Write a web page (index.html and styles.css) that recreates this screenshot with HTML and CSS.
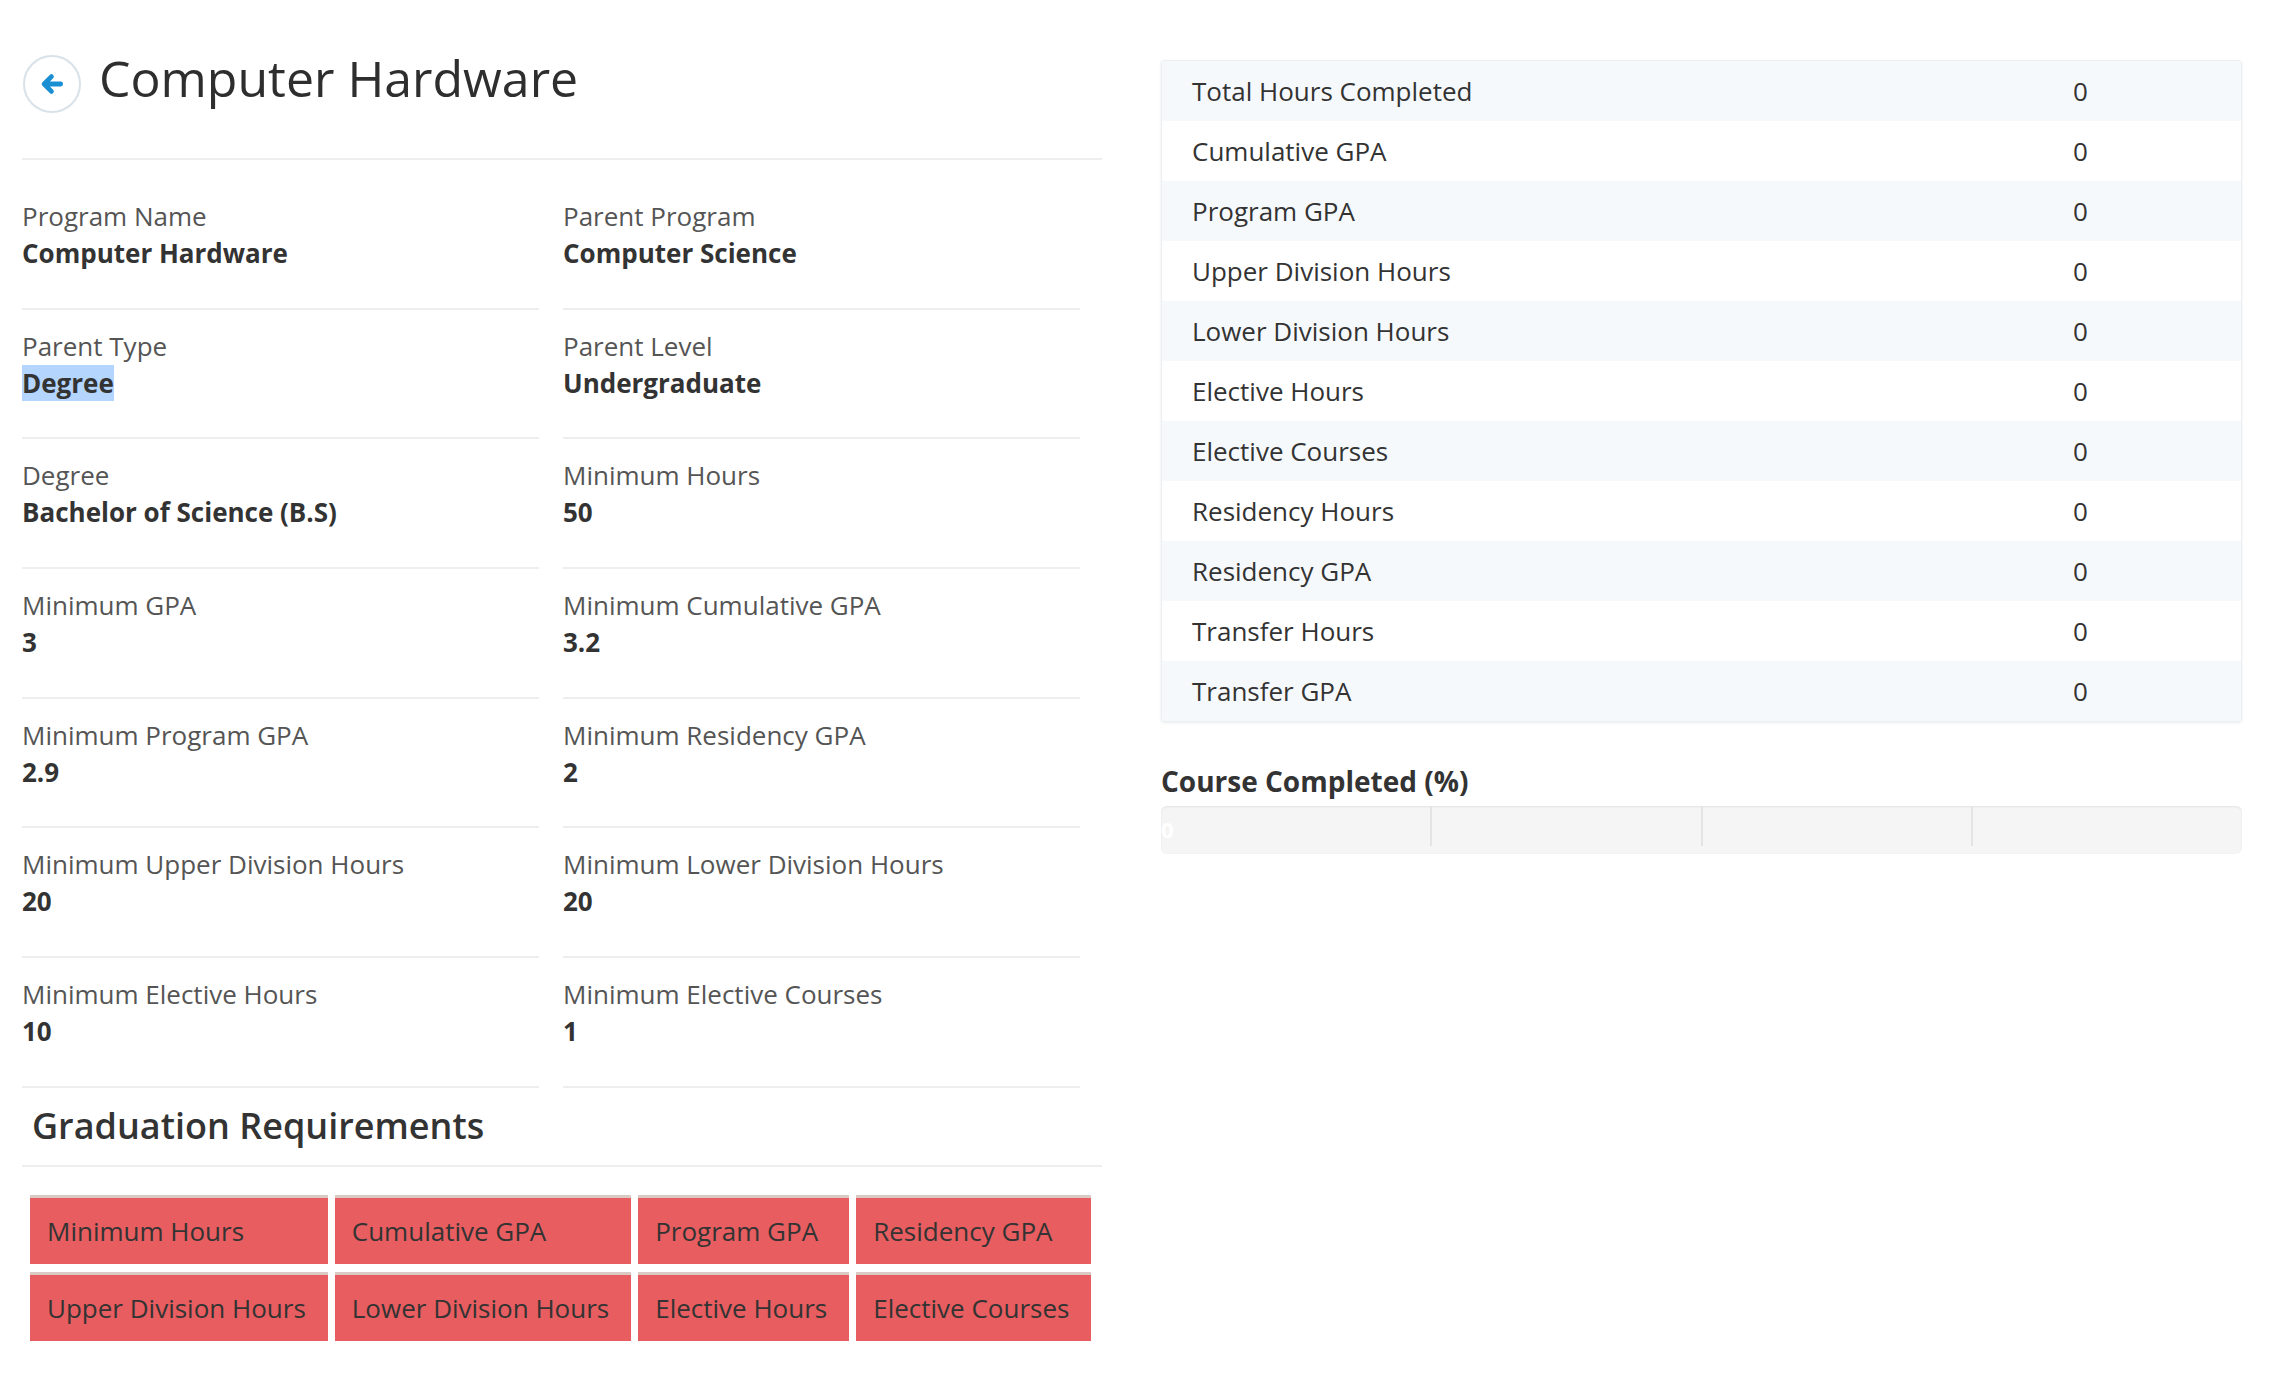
FILE: index.html
```html
<!DOCTYPE html>
<html lang="en">
<head>
<meta charset="utf-8">
<title>Computer Hardware</title>
<link rel="stylesheet" href="styles.css">
</head>
<body>
<div class="page">
  <main class="main">
    <header class="header">
      <a class="back" href="#" aria-label="Back">
        <svg viewBox="0 0 24 24" width="26" height="26" aria-hidden="true">
          <path d="M20 12H5M11.5 5.2L4.7 12l6.8 6.8" fill="none" stroke="#1a8fd3" stroke-width="4.4" stroke-linecap="round" stroke-linejoin="round"/>
        </svg>
      </a>
      <h1 class="title">Computer Hardware</h1>
    </header>

    <div class="fields">
      <div class="field"><div class="label">Program Name</div><div class="value">Computer Hardware</div></div>
      <div class="field"><div class="label">Parent Program</div><div class="value">Computer Science</div></div>
      <div class="field"><div class="label">Parent Type</div><div class="value"><span class="selected">Degree</span></div></div>
      <div class="field"><div class="label">Parent Level</div><div class="value">Undergraduate</div></div>
      <div class="field"><div class="label">Degree</div><div class="value">Bachelor of Science (B.S)</div></div>
      <div class="field"><div class="label">Minimum Hours</div><div class="value">50</div></div>
      <div class="field"><div class="label">Minimum GPA</div><div class="value">3</div></div>
      <div class="field"><div class="label">Minimum Cumulative GPA</div><div class="value">3.2</div></div>
      <div class="field"><div class="label">Minimum Program GPA</div><div class="value">2.9</div></div>
      <div class="field"><div class="label">Minimum Residency GPA</div><div class="value">2</div></div>
      <div class="field"><div class="label">Minimum Upper Division Hours</div><div class="value">20</div></div>
      <div class="field"><div class="label">Minimum Lower Division Hours</div><div class="value">20</div></div>
      <div class="field"><div class="label">Minimum Elective Hours</div><div class="value">10</div></div>
      <div class="field"><div class="label">Minimum Elective Courses</div><div class="value">1</div></div>
    </div>

    <h2 class="section-title">Graduation Requirements</h2>
    <div class="reqs">
      <div class="req">Minimum Hours</div>
      <div class="req">Cumulative GPA</div>
      <div class="req">Program GPA</div>
      <div class="req">Residency GPA</div>
      <div class="req">Upper Division Hours</div>
      <div class="req">Lower Division Hours</div>
      <div class="req">Elective Hours</div>
      <div class="req">Elective Courses</div>
    </div>
  </main>

  <aside class="side">
    <div class="stats">
      <div class="stat"><span class="stat-label">Total Hours Completed</span><span class="stat-value">0</span></div>
      <div class="stat"><span class="stat-label">Cumulative GPA</span><span class="stat-value">0</span></div>
      <div class="stat"><span class="stat-label">Program GPA</span><span class="stat-value">0</span></div>
      <div class="stat"><span class="stat-label">Upper Division Hours</span><span class="stat-value">0</span></div>
      <div class="stat"><span class="stat-label">Lower Division Hours</span><span class="stat-value">0</span></div>
      <div class="stat"><span class="stat-label">Elective Hours</span><span class="stat-value">0</span></div>
      <div class="stat"><span class="stat-label">Elective Courses</span><span class="stat-value">0</span></div>
      <div class="stat"><span class="stat-label">Residency Hours</span><span class="stat-value">0</span></div>
      <div class="stat"><span class="stat-label">Residency GPA</span><span class="stat-value">0</span></div>
      <div class="stat"><span class="stat-label">Transfer Hours</span><span class="stat-value">0</span></div>
      <div class="stat"><span class="stat-label">Transfer GPA</span><span class="stat-value">0</span></div>
    </div>

    <h3 class="progress-title">Course Completed (%)</h3>
    <div class="progress">
      <span class="progress-text">0</span>
      <div class="seg"></div>
      <div class="seg"></div>
      <div class="seg"></div>
      <div class="seg last"></div>
    </div>
  </aside>
</div>
</body>
</html>
```

FILE: styles.css
```css
html, body {
  margin: 0;
  padding: 0;
  background: #fff;
}

body {
  font-family: "Open Sans", "Noto Sans", "Liberation Sans", sans-serif;
  font-size: 26px;
  line-height: 37px;
  color: #333;
}

.page {
  display: flex;
  align-items: flex-start;
  gap: 59px;
  padding-left: 22px;
}

.main {
  width: 1080px;
  flex: none;
}

.side {
  width: 1081px;
  flex: none;
  padding-top: 60px;
}

/* header */
.header {
  display: flex;
  align-items: flex-start;
  height: 58px;
  padding-top: 55px;
  padding-bottom: 45px;
  border-bottom: 2px solid #eee;
}

.back {
  width: 58px;
  height: 58px;
  flex: none;
  box-sizing: border-box;
  margin-left: 1px;
  border: 2px solid #d9e2e8;
  border-radius: 50%;
  display: flex;
  align-items: center;
  justify-content: center;
  background: #fff;
}

.title {
  margin: -2px 0 0 18px;
  font-size: 50px;
  line-height: 50px;
  font-weight: 500;
  color: #2e2e2e;
}

/* fields */
.fields {
  display: grid;
  grid-template-columns: 517px 517px;
  column-gap: 24px;
  margin-top: 20px;
}

.field {
  padding: 18px 0 35.7px;
  border-bottom: 2px solid #eee;
}

.label {
  color: #555;
}

.value {
  font-weight: 700;
  color: #333;
}

.selected {
  background: #b4d5fd;
}

/* graduation requirements */
.section-title {
  margin: 16px 0 0;
  padding: 0 0 17px 10px;
  font-size: 36px;
  line-height: 44px;
  font-weight: 600;
  color: #333;
  border-bottom: 2px solid #eee;
}

.reqs {
  display: grid;
  grid-template-columns: repeat(4, auto);
  justify-content: start;
  column-gap: 7px;
  row-gap: 8px;
  margin: 28px 0 0 8px;
}

.req {
  height: 66px;
  line-height: 66px;
  padding: 0 22px 0 17px;
  background: #e85d5f;
  border-top: 3px solid #d9cbc4;
  color: #333;
  white-space: nowrap;
}

/* stats panel */
.stats {
  border: 1px solid #eceff1;
  border-radius: 3px;
  box-shadow: 0 1px 3px rgba(0, 0, 0, 0.08);
  overflow: hidden;
}

.stat {
  display: grid;
  grid-template-columns: 911px 1fr;
  height: 60px;
  align-items: center;
}

.stat:nth-child(odd) {
  background: #f6f9fc;
}

.stat-label {
  padding-left: 30px;
}

/* progress */
.progress-title {
  margin: 42px 0 8px;
  font-size: 28px;
  line-height: 34px;
  font-weight: 700;
  color: #333;
}

.progress {
  position: relative;
  display: flex;
  height: 48px;
  background: #f5f5f5;
  border-radius: 6px;
  box-shadow: inset 0 1px 2px rgba(0, 0, 0, 0.08);
}

.seg {
  flex: 1;
  height: 40px;
  border-right: 2px solid #e4e4e4;
}

.seg.last {
  border-right: 0;
}

.progress-text {
  position: absolute;
  left: 0;
  top: 0;
  line-height: 46px;
  font-size: 22px;
  font-weight: 700;
  color: #fff;
}
```
